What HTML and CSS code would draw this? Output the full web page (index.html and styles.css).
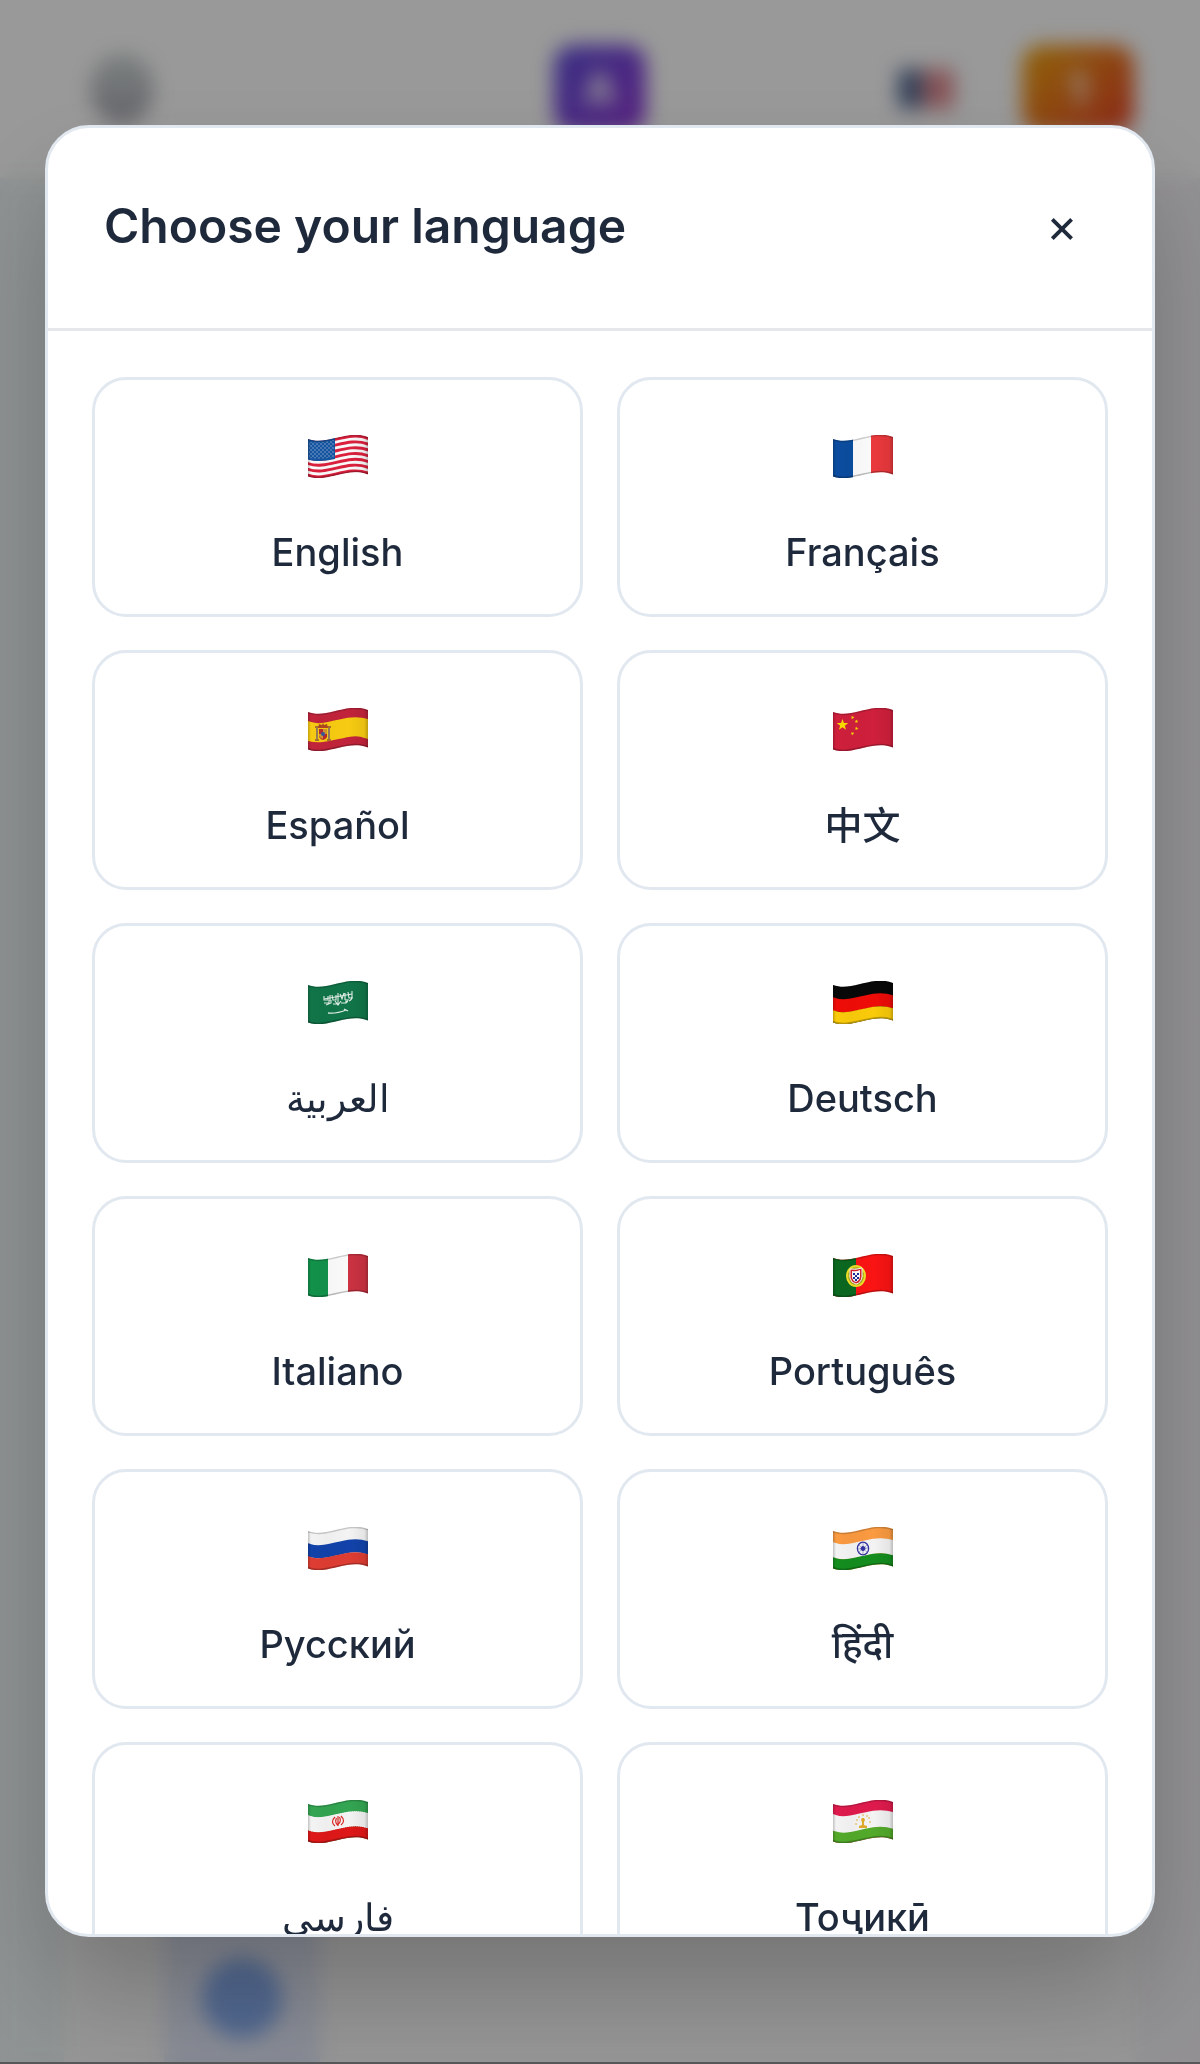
FILE: index.html
```html
<!DOCTYPE html>
<html lang="en">
<head>
    <meta charset="UTF-8">
    <meta name="viewport" content="width=device-width, initial-scale=1.0">
    <title>Choose your language</title>
    <link rel="stylesheet" href="styles.css">
</head>
<body>
    <!-- Shared flag shapes -->
    <svg class="defs" aria-hidden="true">
        <defs>
            <path id="shape" d="M0 3.9c19 7 39-10 60-2v37.600c-21-8-41 9-60 2z"/>
            <path id="wave" d="M-3-1L0 0c19 7 39-10 60-2l3 1" fill="none"/>
            <clipPath id="clip"><use href="#shape"/></clipPath>
            <linearGradient id="fold">
                <stop offset="0" stop-color="#000" stop-opacity=".22"/>
                <stop offset=".05" stop-color="#000" stop-opacity=".02"/>
                <stop offset=".3" stop-color="#000" stop-opacity=".04"/>
                <stop offset=".68" stop-color="#000" stop-opacity=".02"/>
                <stop offset=".94" stop-color="#000" stop-opacity=".08"/>
                <stop offset="1" stop-color="#000" stop-opacity=".25"/>
            </linearGradient>
            <g id="shade">
                <use href="#shape" fill="url(#fold)"/>
                <use href="#wave" y="4.4" stroke="#000" stroke-opacity=".18" stroke-width="2"/>
                <use href="#wave" y="41" stroke="#000" stroke-opacity=".25" stroke-width="2"/>
            </g>
            <path id="star" d="M0-5L1.2-1.6 4.8-1.6 1.9.6 3 4 0 1.9-3 4-1.9.6-4.8-1.6-1.2-1.6z"/>
            <pattern id="stars" width="4" height="4" patternUnits="userSpaceOnUse">
                <circle cx="1" cy="1" r=".7"/>
                <circle cx="3" cy="3" r=".7"/>
            </pattern>
        </defs>
    </svg>

    <div class="page">
        <header class="topbar">
            <span class="avatar"></span>
            <span class="logo">A</span>
            <div class="topbar-right">
                <span class="mini-flag"></span>
                <span class="badge">1</span>
            </div>
        </header>
        <main class="panel">
            <div class="column"><span class="dot"></span></div>
        </main>
    </div>

    <div class="overlay">
        <div class="modal" role="dialog" aria-modal="true" aria-labelledby="modal-title">
            <div class="modal-header">
                <h2 class="modal-title" id="modal-title">Choose your language</h2>
                <button class="close" type="button" aria-label="Close">×</button>
            </div>
            <div class="languages">
                <button class="language" type="button" lang="en">
                    <svg class="flag" viewBox="0 0 60 43" aria-hidden="true"><g clip-path="url(#clip)">
                        <rect width="60" height="43" fill="#fff"/>
                        <g stroke="#e0213f" stroke-width="2.9">
                            <use href="#wave" y="5.3"/><use href="#wave" y="11.1"/><use href="#wave" y="16.9"/><use href="#wave" y="22.7"/><use href="#wave" y="28.5"/><use href="#wave" y="34.3"/><use href="#wave" y="40.1"/>
                        </g>
                        <path d="M0 3c9 3 17 2 27-1v22c-10 2-18 3-27 .5z" fill="#1657a5"/>
                        <path d="M1 7c9 1 16 0 25-2v17c-9 2-16 2-25 1z" fill="url(#stars)" class="stars"/>
                        <use href="#shade"/>
                    </g></svg>
                    <span class="name">English</span>
                </button>
                <button class="language" type="button" lang="fr">
                    <svg class="flag" viewBox="0 0 60 43" aria-hidden="true"><g clip-path="url(#clip)">
                        <rect width="60" height="43" fill="#fff"/>
                        <rect width="20" height="43" fill="#0b4ea2"/>
                        <rect x="38" width="22" height="43" fill="#ef3a3e"/>
                        <use href="#shade"/>
                    </g></svg>
                    <span class="name">Français</span>
                </button>
                <button class="language" type="button" lang="es">
                    <svg class="flag" viewBox="0 0 60 43" aria-hidden="true"><g clip-path="url(#clip)">
                        <rect width="60" height="43" fill="#c5243c"/>
                        <use href="#wave" y="23" stroke="#fccf12" stroke-width="19"/>
                        <path d="M8 19h2v13H8zM20 19h2v13h-2z" fill="#9b8059"/>
                        <path d="M7 31h4v2H7zM19 31h4v2h-4zM7 18h4v2H7zM19 18h4v2h-4z" fill="#b0742c"/>
                        <path d="M11 21h8v8q-4 6-8 0z" fill="#bd2c2d"/>
                        <path d="M15 21h4v5h-4zM11 26h4v5q-3-1-4-3z" fill="#d79a30"/>
                        <circle cx="15" cy="26" r="2" fill="#3a5aa0"/>
                        <path d="M10 20l1-4 3 1 1-2 1 2 3-1 1 4z" fill="#b44822"/>
                        <use href="#shade"/>
                    </g></svg>
                    <span class="name">Español</span>
                </button>
                <button class="language" type="button" lang="zh">
                    <svg class="flag" viewBox="0 0 60 43" aria-hidden="true"><g clip-path="url(#clip)">
                        <rect width="60" height="43" fill="#d3203d"/>
                        <g fill="#ffe000">
                            <use href="#star" transform="translate(9.500 17) scale(1.2)"/>
                            <use href="#star" transform="translate(19.500 9.500) scale(.4) rotate(20)"/>
                            <use href="#star" transform="translate(23.500 13.500) scale(.4)"/>
                            <use href="#star" transform="translate(23.500 20.500) scale(.4) rotate(15)"/>
                            <use href="#star" transform="translate(19.500 25.500) scale(.4) rotate(30)"/>
                        </g>
                        <use href="#shade"/>
                    </g></svg>
                    <span class="name">中文</span>
                </button>
                <button class="language" type="button" lang="ar">
                    <svg class="flag" viewBox="0 0 60 43" aria-hidden="true"><g clip-path="url(#clip)">
                        <rect width="60" height="43" fill="#11774a"/>
                        <g fill="none" stroke="#e5f2eb" stroke-width="1.100">
                            <path d="M16 15v4h4v-4M22 14v6M24 14l1 5h3v-5M30 12v7M32 13l2 5 2-6M37 12v7M40 11l1 6h3v-7"/>
                            <path d="M16 22h5v-3M18 24l5-2v-3M25 23h5v-4M27 20l3 4 3-4M33 22h5v-4M36 22q4 0 4-4M41 20q3-1 3-4M16 18l28-5"/>
                            <path d="M20 32q8 1 18-3M36 28l4 2" stroke-width="1.300"/>
                        </g>
                        <use href="#shade"/>
                    </g></svg>
                    <span class="name">العربية</span>
                </button>
                <button class="language" type="button" lang="de">
                    <svg class="flag" viewBox="0 0 60 43" aria-hidden="true"><g clip-path="url(#clip)">
                        <rect width="60" height="43" fill="#080808"/>
                        <use href="#wave" y="23" stroke="#f40c08" stroke-width="13"/>
                        <use href="#wave" y="36" stroke="#ffcf0a" stroke-width="13"/>
                        <use href="#shade"/>
                    </g></svg>
                    <span class="name">Deutsch</span>
                </button>
                <button class="language" type="button" lang="it">
                    <svg class="flag" viewBox="0 0 60 43" aria-hidden="true"><g clip-path="url(#clip)">
                        <rect width="60" height="43" fill="#fff"/>
                        <rect width="20" height="43" fill="#12944c"/>
                        <rect x="40" width="20" height="43" fill="#cf3343"/>
                        <use href="#shade"/>
                    </g></svg>
                    <span class="name">Italiano</span>
                </button>
                <button class="language" type="button" lang="pt">
                    <svg class="flag" viewBox="0 0 60 43" aria-hidden="true"><g clip-path="url(#clip)">
                        <rect width="60" height="43" fill="#ff1414"/>
                        <rect width="23" height="43" fill="#0b6a20"/>
                        <ellipse cx="23" cy="22" rx="9" ry="10" fill="#a8a51c"/>
                        <ellipse cx="23" cy="22" rx="9" ry="10" fill="none" stroke="#f2e528" stroke-width="2"/>
                        <path d="M14 22h18M23 12v20" stroke="#e2d526"/>
                        <path d="M17 15q6 1 12-1v9q-1 6-6 7-5-1-6-6z" fill="#d8202c" stroke="#fff"/>
                        <path d="M19 17q4 1 8-1v7q-1 4-4 5-3-1-4-4z" fill="#fff"/>
                        <path d="M20 19h2v2h-2zM24 19h2v2h-2zM22 21h2v2h-2zM20 23h2v2h-2zM24 23h2v2h-2zM22 25h2v2h-2z" fill="#1c2e9c"/>
                        <use href="#shade"/>
                    </g></svg>
                    <span class="name">Português</span>
                </button>
                <button class="language" type="button" lang="ru">
                    <svg class="flag" viewBox="0 0 60 43" aria-hidden="true"><g clip-path="url(#clip)">
                        <rect width="60" height="43" fill="#f8f8f8"/>
                        <use href="#wave" y="23" stroke="#1244ad" stroke-width="13"/>
                        <use href="#wave" y="36" stroke="#e33e34" stroke-width="13"/>
                        <use href="#shade"/>
                    </g></svg>
                    <span class="name">Русский</span>
                </button>
                <button class="language" type="button" lang="hi">
                    <svg class="flag" viewBox="0 0 60 43" aria-hidden="true"><g clip-path="url(#clip)">
                        <rect width="60" height="43" fill="#ff9d42"/>
                        <use href="#wave" y="23" stroke="#f8f8f8" stroke-width="15"/>
                        <use href="#wave" y="37" stroke="#15901f" stroke-width="13"/>
                        <g stroke="#3535a5" fill="none">
                            <ellipse cx="30" cy="21.500" rx="5.600" ry="6.400" stroke-width="1.300"/>
                            <path d="M30 16v11M25 22l10-1M26 18l8 7M26 25l8-7" stroke-width=".4"/>
                            <circle cx="30" cy="21.500" r="2" fill="#3535a5"/>
                        </g>
                        <use href="#shade"/>
                    </g></svg>
                    <span class="name">हिंदी</span>
                </button>
                <button class="language" type="button" lang="fa">
                    <svg class="flag" viewBox="0 0 60 43" aria-hidden="true"><g clip-path="url(#clip)">
                        <rect width="60" height="43" fill="#34a853"/>
                        <use href="#wave" y="23" stroke="#f8f8f8" stroke-width="15"/>
                        <use href="#wave" y="37" stroke="#e31818" stroke-width="13"/>
                        <use href="#wave" y="16" stroke="#fff" stroke-dasharray="1 1"/>
                        <use href="#wave" y="30" stroke="#fff" stroke-dasharray="1 1"/>
                        <path d="M27 17q-5 5 0 9M33 16q5 5 0 9M28.500 18q-2 4 1 7M31.500 17q2 4-1 7M30 16v10" fill="none" stroke="#e02a26" stroke-width="1.200"/>
                        <use href="#shade"/>
                    </g></svg>
                    <span class="name">فارسی</span>
                </button>
                <button class="language" type="button" lang="tg">
                    <svg class="flag" viewBox="0 0 60 43" aria-hidden="true"><g clip-path="url(#clip)">
                        <rect width="60" height="43" fill="#e31b4e"/>
                        <use href="#wave" y="23" stroke="#f8f8f8" stroke-width="17"/>
                        <use href="#wave" y="37" stroke="#54ad2b" stroke-width="12"/>
                        <g fill="#e5ae2c">
                            <path d="M29 18h2l1 2-1 2v3l3 1v2h-8v-2l3-1v-3l-1-2z"/>
                            <circle cx="23" cy="24" r=".8"/><circle cx="24" cy="20" r=".8"/><circle cx="26" cy="17" r=".8"/>
                            <circle cx="30" cy="15" r=".8"/><circle cx="34" cy="16" r=".8"/><circle cx="36" cy="18" r=".8"/><circle cx="37" cy="22" r=".8"/>
                        </g>
                        <use href="#shade"/>
                    </g></svg>
                    <span class="name">Тоҷикӣ</span>
                </button>
            </div>
        </div>
    </div>
</body>
</html>
```
FILE: styles.css
```css
* {
    box-sizing: border-box;
}
body {
    margin: 0;
    font-family: Inter, "Noto Sans", "Noto Sans CJK SC", sans-serif;
    color: #1e293b;
}
.defs {
    display: block;
    width: 0;
    height: 0;
}
.stars {
    opacity: .6;
}
#stars {
    fill: #fff;
}

/* Page behind the dialog */
.page {
    display: flex;
    flex-direction: column;
    height: 100vh;
    overflow: hidden;
    background: linear-gradient(90deg, #eef5f5, #f3f1f6);
}
.topbar {
    display: grid;
    grid-template-columns: 1fr auto 1fr;
    align-items: center;
    height: 178px;
    padding: 0 66px;
    background: #fff;
}
.avatar {
    width: 64px;
    height: 72px;
    margin-left: 24px;
    border-radius: 50%;
    background: linear-gradient(#d0d8d7, #a8a8b0);
}
.logo, .badge {
    display: flex;
    align-items: center;
    justify-content: center;
    height: 88px;
    border-radius: 20px;
    color: #fff;
    font-size: 44px;
    font-weight: 700;
}
.logo {
    width: 92px;
    background: linear-gradient(135deg, #6050dc, #9035d5);
}
.topbar-right {
    display: flex;
    align-items: center;
    justify-content: flex-end;
    gap: 68px;
}
.mini-flag {
    width: 56px;
    height: 40px;
    background: linear-gradient(90deg, #5a7098 45%, #e08c92 45%);
}
.badge {
    width: 112px;
    background: linear-gradient(135deg, #f0a810, #e84028);
}
.panel {
    flex: 1;
    display: flex;
    align-items: flex-end;
    margin: 60px 64px 0;
    padding-left: 100px;
    background: #fafafa;
}
.column {
    display: flex;
    align-items: flex-end;
    justify-content: center;
    width: 156px;
    height: 400px;
    padding-bottom: 26px;
    background: #e2e8f8;
}
.dot {
    width: 80px;
    height: 80px;
    border-radius: 50%;
    background: #89aef0;
}

/* Dialog */
.overlay {
    position: fixed;
    inset: 0;
    display: flex;
    align-items: center;
    justify-content: center;
    padding: 125px 45px;
    border-bottom: 2px solid #58585a;
    background: rgba(0, 0, 0, .4);
    backdrop-filter: blur(10px);
}
.modal {
    display: flex;
    flex-direction: column;
    width: 100%;
    max-height: 100%;
    overflow: hidden;
    border: 3px solid #e2e8f0;
    border-radius: 44px;
    background: #fff;
    box-shadow: 0 56px 112px -10px rgba(0, 0, 0, .25);
}
.modal-header {
    flex: none;
    display: flex;
    align-items: center;
    justify-content: space-between;
    height: 203px;
    padding: 0 54px 4px 56px;
    border-bottom: 3px solid #e5e7eb;
}
.modal-title {
    margin: 0;
    font-size: 48px;
    font-weight: 600;
    line-height: 60px;
}
.close {
    width: 72px;
    height: 72px;
    padding: 0;
    border: 0;
    background: none;
    color: inherit;
    font: 400 48px/72px Inter, sans-serif;
    cursor: pointer;
}
.languages {
    display: grid;
    grid-template-columns: 1fr 1fr;
    gap: 33px 34px;
    padding: 46px 44px;
    overflow-y: auto;
    scrollbar-width: none;
}
.language {
    display: flex;
    flex-direction: column;
    align-items: center;
    gap: 46px;
    height: 240px;
    padding: 55px 20px 0;
    border: 3px solid #e2e8f0;
    border-radius: 34px;
    background: #fff;
    color: inherit;
    font-family: inherit;
    cursor: pointer;
}
.language:hover {
    border-color: #94a3b8;
}
.flag {
    flex: none;
    width: 60px;
    height: 43px;
}
.name {
    font-size: 38px;
    font-weight: 500;
    line-height: 56px;
    white-space: nowrap;
}
```
